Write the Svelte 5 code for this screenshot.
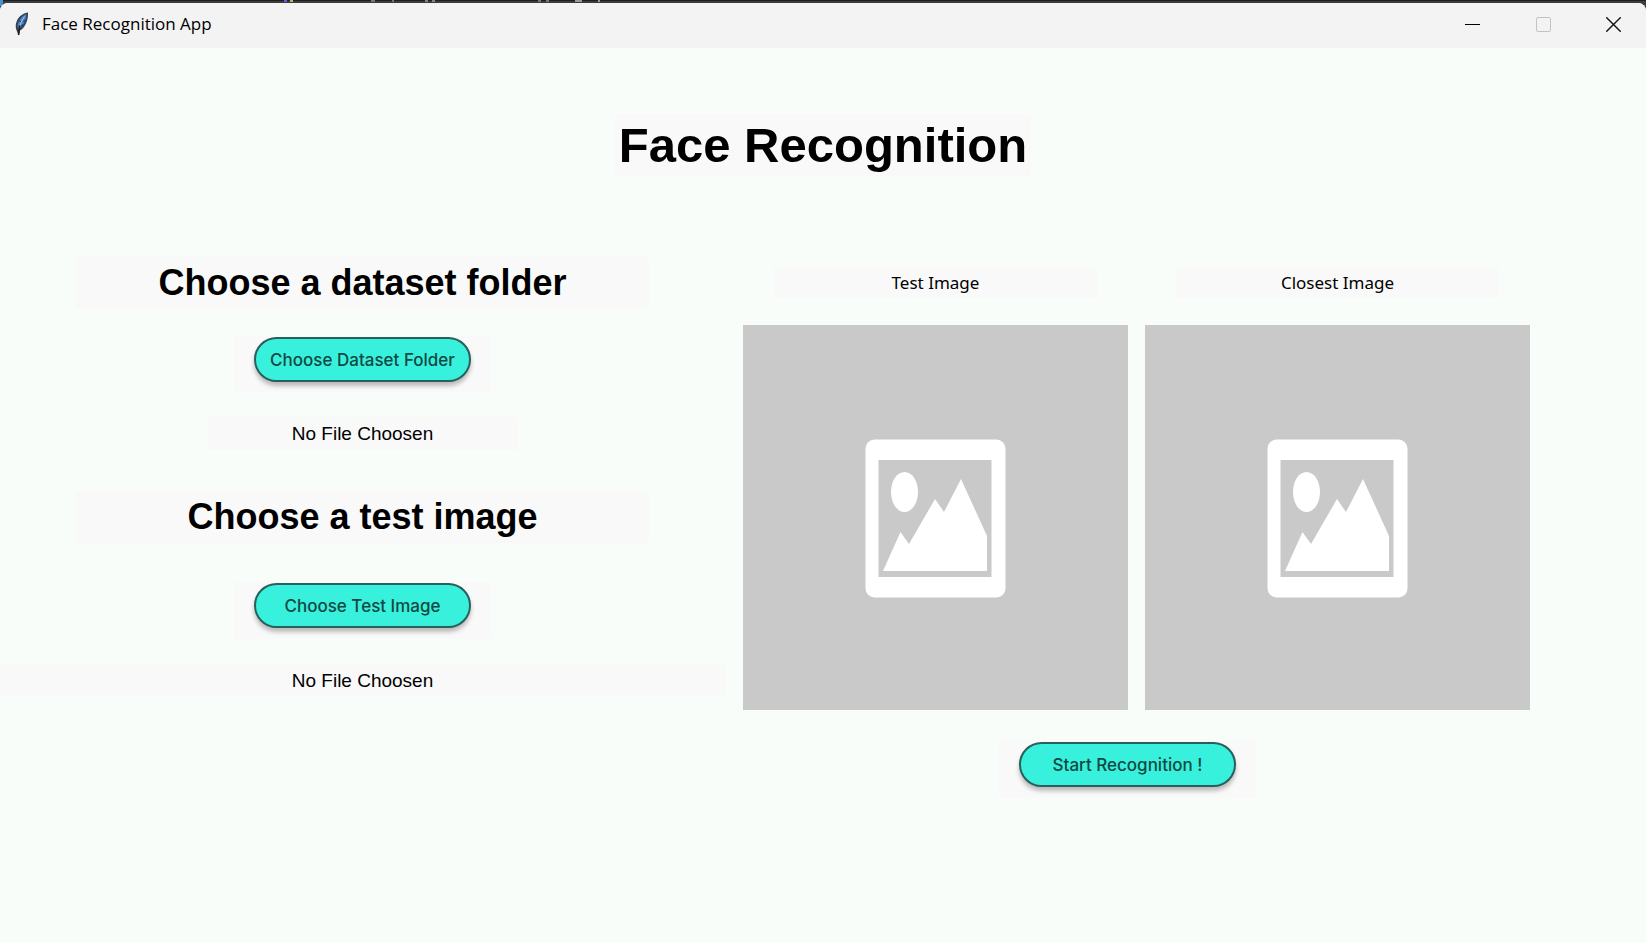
<script>
  let datasetStatus = $state('No File Choosen');
  let testStatus = $state('No File Choosen');
  const previews = ['Test Image', 'Closest Image'];
  // Fragments of the editor tabs that show above the window: x, width, colour
  const fragments = [
    [284, 3, '#5a63d8'], [290, 3, '#b9b36a'], [371, 4, '#777'], [392, 2, '#777'],
    [425, 3, '#86818f'], [432, 3, '#86818f'], [538, 3, '#777'], [546, 3, '#777'],
    [575, 7, '#999'], [598, 2, '#999']
  ];
</script>

<div class="desktop">
  <svg class="behind" aria-hidden="true">
    <rect width="100%" height="1" fill="#1f1f1f" />
    <rect y="1" width="100%" height="11" fill="#3c3c3c" />
    {#each fragments as [x, width, fill]}
      <rect {x} {width} height="2" {fill} />
    {/each}
    <rect width="3" height="6" fill="#4a8fd0" />
  </svg>
  <div class="window">
    <header class="titlebar">
      <svg class="feather" width="16" height="24" viewBox="0 0 16 24" aria-hidden="true">
        <path d="M14 .6C10 .8 5 4 2.800 9 1.500 12 1.300 15.500 2.600 18.500L4.600 23.500 6 18.500C10.500 16.500 14.500 9 14 .6Z" fill="#39424c" />
        <path d="M12.300 2.200C8.800 3.500 5.200 7 4 11.500c-.5 1.800-.4 3.500 .2 5.200C9 14.500 12.300 8.500 12.300 2.200Z" fill="#4384d2" />
        <path d="M10.500 4.500C8 8 6 12 5 17" fill="none" stroke="#a9c8ea" stroke-width="1" />
        <path d="M11 8.500 9.300 9.500M9 13 7.300 13.500M5.500 8.500 6.500 10" fill="none" stroke="#1b2630" stroke-width="1" />
        <path d="M5.600 13.500 4.600 23" fill="none" stroke="#1b1b1b" stroke-width="1.600" />
      </svg>
      <span class="caption">Face Recognition App</span>
      <button class="control" aria-label="Minimize">
        <svg width="15" height="15" viewBox="0 0 15 15"><path d="M0 7.500H15" stroke="#000" /></svg>
      </button>
      <button class="control" aria-label="Maximize" disabled>
        <svg width="15" height="15" viewBox="0 0 15 15"><rect x=".5" y=".5" width="14" height="14" rx="1.500" fill="none" stroke="#c3c3c3" /></svg>
      </button>
      <button class="control" aria-label="Close">
        <svg width="15" height="15" viewBox="0 0 15 15"><path d="M.3 .3 14.700 14.700M14.700 .3 .3 14.700" stroke="#111" stroke-width="1.400" /></svg>
      </button>
    </header>

    <main>
      <h1>Face Recognition</h1>
      <div class="columns">
        <section class="inputs">
          <h2>Choose a dataset folder</h2>
          <div class="pad"><button class="pill">Choose Dataset Folder</button></div>
          <p class="status short">{datasetStatus}</p>
          <h2 class="second">Choose a test image</h2>
          <div class="pad lower"><button class="pill">Choose Test Image</button></div>
          <p class="status">{testStatus}</p>
        </section>

        <section class="results">
          <div class="previews">
            {#each previews as label}
              <figure>
                <figcaption>{label}</figcaption>
                <svg class="placeholder" viewBox="0 0 385 385" role="img" aria-label={label}>
                  <rect width="385" height="385" fill="#c9c9c9" />
                  <rect x="122.500" y="114.500" width="140" height="158" rx="9" fill="#fff" />
                  <rect x="135.500" y="135" width="113" height="117" fill="#c9c9c9" />
                  <ellipse cx="161.500" cy="167" rx="13.500" ry="20" fill="#fff" />
                  <path d="M140 246 157.500 207 166 219 192 174 201 187 218 154 244 211V246Z" fill="#fff" />
                </svg>
              </figure>
            {/each}
          </div>
          <div class="pad start"><button class="pill">Start Recognition !</button></div>
        </section>
      </div>
    </main>
  </div>
</div>

<style>
  :global(body) {
    margin: 0;
    background: #f8fdf9;
  }

  .desktop {
    position: relative;
    min-height: 100vh;
    padding-top: 3px;
    box-sizing: border-box;
    font-family: "Liberation Sans", Arial, sans-serif;
    color: #000;
  }

  .behind {
    position: absolute;
    top: 0;
    left: 0;
    width: 100%;
    height: 12px;
  }

  .window {
    position: relative;
    background: #f8fdf9;
    border-radius: 8px 8px 0 0;
    overflow: hidden;
  }

  .titlebar {
    display: flex;
    align-items: center;
    gap: 2px;
    box-sizing: border-box;
    height: 45px;
    padding: 0 0 3px 14px;
    background: #f3f3f3;
  }

  .feather {
    margin-right: 10px;
  }

  .caption {
    flex: 1;
    font: 17px/24px "Open Sans", "Noto Sans", sans-serif;
  }

  .control {
    display: flex;
    align-items: center;
    justify-content: center;
    width: 69px;
    height: 42px;
    padding: 0;
    border: 0;
    background: none;
  }

  .control:last-child {
    width: 66px;
  }

  main {
    display: flex;
    flex-direction: column;
    padding: 66px 0 144px;
  }

  h1,
  h2,
  p,
  figure {
    margin: 0;
  }

  h1,
  h2,
  .pad,
  .status,
  figcaption {
    background: #f9f9f9;
    text-align: center;
  }

  h1 {
    align-self: center;
    padding: 0 4px;
    font-size: 49px;
    line-height: 63px;
  }

  .columns {
    display: grid;
    grid-template-columns: 725fr 805fr 116fr;
    align-items: start;
    margin-top: 80px;
  }

  .inputs,
  .results {
    display: flex;
    flex-direction: column;
    align-items: center;
  }

  h2 {
    width: 79%;
    font-size: 36px;
    line-height: 52px;
  }

  .second {
    margin-top: 41px;
  }

  .pad {
    box-sizing: border-box;
    width: 257px;
    height: 57px;
    margin-top: 27px;
    padding-top: 1px;
  }

  .lower {
    margin-top: 39px;
  }

  .pill {
    width: 217px;
    height: 45px;
    padding: 0;
    border: 2px solid #2a5f5b;
    border-radius: 24px;
    background: #38f1dc;
    box-shadow: 0 4px 4px rgba(0, 0, 0, 0.25);
    color: #124843;
    font: 500 17px/20px Inter, sans-serif;
  }

  .status {
    width: 100%;
    margin-top: 25px;
    font-size: 19px;
    line-height: 33px;
  }

  .short {
    width: 309px;
    margin-top: 24px;
  }

  .results {
    padding-top: 10px;
  }

  .previews {
    display: grid;
    grid-template-columns: 1fr 1fr;
    gap: 17px;
    box-sizing: border-box;
    width: 100%;
    padding-left: 18px;
  }

  figure {
    display: flex;
    flex-direction: column;
    align-items: center;
    gap: 27px;
  }

  figcaption {
    width: 84%;
    font: 17px/31px "Noto Sans", "Open Sans", sans-serif;
  }

  .placeholder {
    display: block;
    width: 100%;
    height: auto;
  }

  .start {
    margin-top: 31px;
  }
</style>
